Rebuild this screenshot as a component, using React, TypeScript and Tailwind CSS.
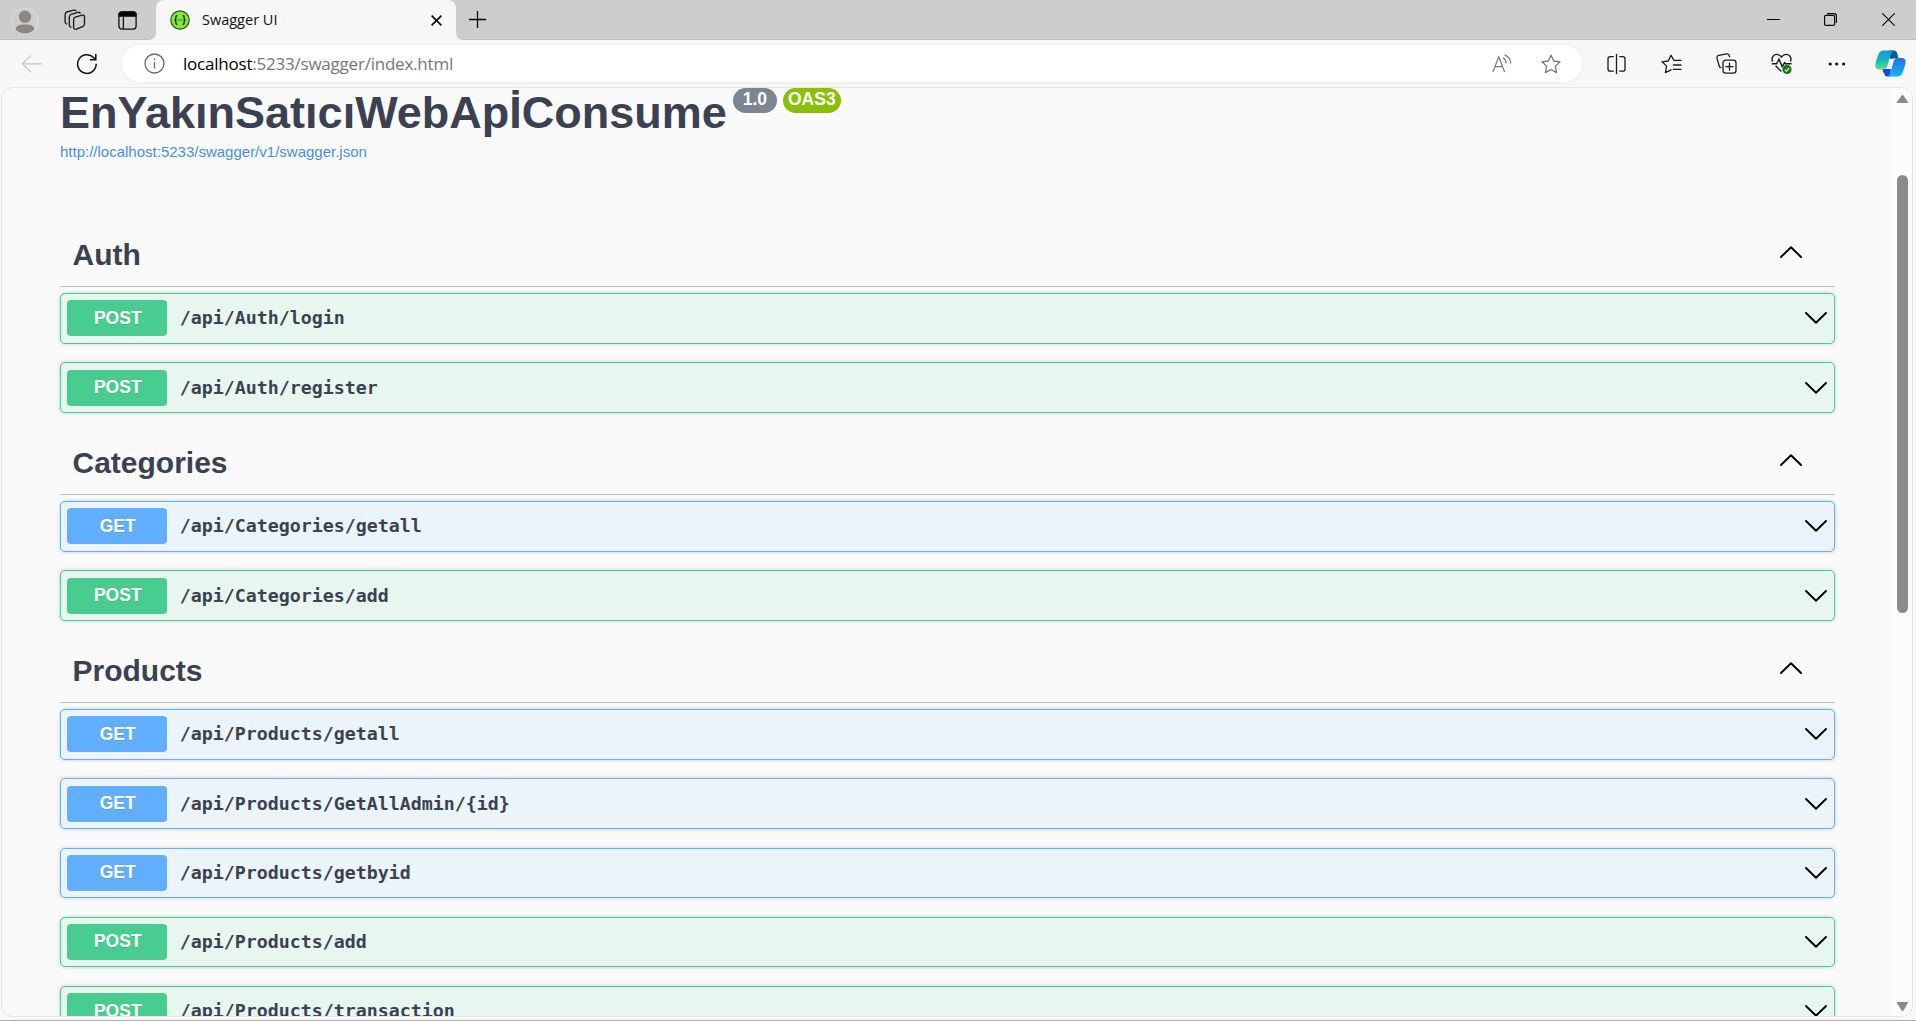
import React from "react";

type Method = "GET" | "POST";

const sections: { name: string; ops: [Method, string][] }[] = [
  { name: "Auth", ops: [["POST", "/api/Auth/login"], ["POST", "/api/Auth/register"]] },
  { name: "Categories", ops: [["GET", "/api/Categories/getall"], ["POST", "/api/Categories/add"]] },
  {
    name: "Products",
    ops: [
      ["GET", "/api/Products/getall"],
      ["GET", "/api/Products/GetAllAdmin/{id}"],
      ["GET", "/api/Products/getbyid"],
      ["POST", "/api/Products/add"],
      ["POST", "/api/Products/transaction"],
    ],
  },
];

function Chevron({ up = false }: { up?: boolean }) {
  return (
    <svg width="22" height="12" viewBox="0 0 22 12" fill="none" stroke="#000" strokeWidth="1.9" strokeLinecap="round" strokeLinejoin="round">
      <path d={up ? "M1 11 L11 1.2 L21 11" : "M1 1 L11 10.8 L21 1"} />
    </svg>
  );
}

function Operation({ method, path }: { method: Method; path: string }) {
  const post = method === "POST";
  return (
    <div
      className={
        "mb-[18.75px] flex h-[50.5px] shrink-0 items-center rounded-[5px] border pr-[7.5px] pl-[6.25px] shadow-[0_0_4px_rgba(0,0,0,0.19)] " +
        (post ? "border-[#49cc90] bg-[#e7f6ef]" : "border-[#61affe] bg-[#ebf3fb]")
      }
    >
      <span
        className={
          "flex h-9 w-[100px] shrink-0 items-center justify-center rounded-[4px] pl-px text-[17.5px] leading-none font-bold text-white [text-shadow:0_1px_0_rgba(0,0,0,0.1)] " +
          (post ? "bg-[#49cc90]" : "bg-[#61affe]")
        }
      >
        {method}
      </span>
      <span className="ml-[12.5px] flex-1 font-['DejaVu_Sans_Mono',monospace] text-[18.27px] leading-6 font-bold text-[#3b4151]">{path}</span>
      <Chevron />
    </div>
  );
}

function Section({ name, ops }: { name: string; ops: [Method, string][] }) {
  return (
    <section className="shrink-0">
      <div className="mb-[6.25px] flex h-[63.15px] items-center justify-between border-b border-[rgba(59,65,81,0.3)] pr-[33.5px] pl-[12.5px]">
        <h2 className="text-[30px] leading-9 font-bold text-[#3b4151]">{name}</h2>
        <div className="pb-[5px]">
          <Chevron up />
        </div>
      </div>
      {ops.map(([m, p]) => (
        <Operation key={p} method={m} path={p} />
      ))}
    </section>
  );
}

function TitleBar() {
  return (
    <div className="flex h-10 shrink-0 border-b border-[#bfbfbf] bg-[#cdcdcd]">
      <div className="flex w-[156px] items-center">
        <svg className="mt-0.5 ml-[11px]" width="28" height="28" viewBox="0 0 28 28">
          <circle cx="14" cy="14" r="13.2" fill="#d0cecb" stroke="#dedcd9" />
          <circle cx="14" cy="9.8" r="6.2" fill="#8b8783" />
          <path d="M4.6 22.4 C5 18.6 8 17.4 14 17.4 S23 18.6 23.4 22.4 A13 13 0 0 1 4.6 22.4Z" fill="#8b8783" />
        </svg>
        <svg className="ml-[25px]" width="22" height="22" viewBox="0 0 22 22" fill="none" stroke="#1b1b1b" strokeWidth="1.35" strokeLinejoin="round" strokeLinecap="round">
          <path d="M11.2 8.2 L18.3 6.2 Q20.4 5.8 20.5 7.8 V15 Q20.4 17 18.6 17.6 L12.4 20.2 Q9.9 20.8 9.6 18.4 V10.6 Q9.7 8.6 11.2 8.2Z" />
          <path d="M6.9 18.2 Q5.4 17.8 5.3 16 V8 Q5.4 6 7 5.4 L14 3.3 Q15.6 3 16.2 4.2" />
          <path d="M2.6 15 Q1.2 14.4 1.1 13 V5.6 Q1.2 3.6 2.8 3 L9.6 1.2 Q11.2 .8 12 1.8" />
        </svg>
        <svg className="mt-px ml-8" width="19" height="19" viewBox="0 0 19 19" fill="none" stroke="#111" strokeWidth="1.3">
          <rect x=".9" y=".9" width="17.2" height="17.2" rx="3" />
          <path d="M1 5.2 V3.6 Q1 1 3.6 1 H15.4 Q18 1 18 3.6 V5.2Z" fill="#000" />
          <path d="M5.4 5 V18" />
        </svg>
      </div>
      <div className="relative flex h-10 w-[300px] items-center rounded-t-[8px] bg-[#f7f7f7] pl-[14px]">
        <svg className="absolute bottom-0 -left-2" width="8" height="8" viewBox="0 0 8 8">
          <path d="M8 0 V8 H0 Q8 8 8 0Z" fill="#f7f7f7" />
        </svg>
        <svg className="absolute -right-2 bottom-0" width="8" height="8" viewBox="0 0 8 8">
          <path d="M0 0 V8 H8 Q0 8 0 0Z" fill="#f7f7f7" />
        </svg>
        <svg width="20" height="20" viewBox="0 0 20 20">
          <circle cx="10" cy="10" r="9.2" fill="#85ea2d" stroke="#2c5a4b" strokeWidth="1.3" />
          <path d="M7.4 5.6 Q5.8 5.6 5.8 7.2 V8.6 Q5.8 10 4.4 10 Q5.8 10 5.8 11.4 V12.8 Q5.8 14.4 7.4 14.4 M12.6 5.6 Q14.2 5.6 14.2 7.2 V8.6 Q14.2 10 15.6 10 Q14.2 10 14.2 11.4 V12.8 Q14.2 14.4 12.6 14.4" fill="none" stroke="#173647" strokeWidth="1.5" />
          <path d="M7.3 10h1.2M9.4 10h1.2M11.5 10h1.2" stroke="#173647" strokeWidth="1.2" />
        </svg>
        <span className="ml-3 font-['Open_Sans',sans-serif] text-[14.5px] text-[#111]">Swagger UI</span>
        <svg className="mt-px mr-[14px] ml-auto" width="11" height="11" viewBox="0 0 11 11" stroke="#000" strokeWidth="1.5">
          <path d="M.6 .6 L10.4 10.4 M10.4 .6 L.6 10.4" />
        </svg>
      </div>
      <svg className="mt-[11px] ml-[13px]" width="17" height="17" viewBox="0 0 17 17" stroke="#000" strokeWidth="1.3">
        <path d="M0 8.5H17 M8.5 0V17" />
      </svg>
      <div className="ml-auto flex h-[39px] items-center pr-[21px]">
        <svg width="13" height="13" viewBox="0 0 13 13" stroke="#000">
          <path d="M0 6.5H13" />
        </svg>
        <svg className="ml-11" width="13" height="13" viewBox="0 0 13 13" fill="none" stroke="#000" strokeWidth="1.1">
          <rect x=".6" y="2.4" width="10" height="10" rx="1.4" />
          <path d="M3 .6 H10.2 Q12.4 .6 12.4 2.8 V10" />
        </svg>
        <svg className="ml-[45px]" width="13" height="13" viewBox="0 0 13 13" stroke="#000" strokeWidth="1.1">
          <path d="M.2 .2 L12.8 12.8 M12.8 .2 L.2 12.8" />
        </svg>
      </div>
    </div>
  );
}

const STAR = "M10 1.2 L12.7 7 L19 7.8 L14.4 12.1 L15.6 18.6 L10 15.5 L4.4 18.6 L5.6 12.1 L1 7.8 L7.3 7Z";

function Toolbar() {
  return (
    <div className="flex h-[47px] shrink-0 items-center bg-[#f7f7f7]">
      <svg className="ml-[21px]" width="22" height="20" viewBox="0 0 22 20" fill="none" stroke="#c8c8c8" strokeWidth="1.3">
        <path d="M21 9.8H1.2 M10 1.4 L1.4 9.8 L10 18.2" />
      </svg>
      <svg className="ml-[33px]" width="22" height="22" viewBox="0 0 22 22" fill="none" stroke="#111" strokeWidth="1.5">
        <path d="M20.2 10.8 A9.3 9.3 0 1 1 17.6 4.6 L19.6 6.6 M19.8 1 V6.8 H13.9" />
      </svg>
      <div className="ml-[24px] flex h-[37px] w-[1460px] items-center rounded-full bg-white pl-[22px] shadow-[0_0_4px_rgba(0,0,0,0.06)]">
        <svg width="21" height="21" viewBox="0 0 21 21" fill="none" stroke="#6b6b6b" strokeWidth="1.3">
          <circle cx="10.5" cy="10.5" r="9.5" />
          <path d="M10.5 9 V15.5 M10.5 5.5 V7.2" />
        </svg>
        <span className="ml-[18px] font-['Open_Sans',sans-serif] text-[17px] tracking-[-0.22px] text-[#767676]">
          <span className="text-black">localhost</span>:5233/swagger/index.html
        </span>
        <svg className="ml-auto" width="20" height="19" viewBox="0 0 20 19" fill="none" stroke="#767676" strokeWidth="1.2">
          <path d="M.8 18 L6.8 2.8 L12.6 18 M3 12.6 H10.6 M11 3.8 Q14 5.4 14.2 9.4 M12.4 .8 Q18.4 3.4 18.8 9.4" />
        </svg>
        <svg className="mr-[21px] ml-[29px]" width="20" height="20" viewBox="0 0 20 20" fill="none" stroke="#767676" strokeWidth="1.3" strokeLinejoin="round">
          <path d={STAR} />
        </svg>
      </div>
      <svg className="ml-[25px]" width="19" height="20" viewBox="0 0 19 20" fill="none" stroke="#1b1b1b" strokeWidth="1.3">
        <path d="M6.8 2.6 H3.2 Q1 2.6 1 4.8 V15 Q1 17.2 3.2 17.2 H6.8 M12.2 2.6 H15.8 Q18 2.6 18 4.8 V15 Q18 17.2 15.8 17.2 H12.2 M9.5 0 V20" />
      </svg>
      <svg className="ml-[35px]" width="21" height="20" viewBox="0 0 21 20" fill="none" stroke="#1b1b1b" strokeWidth="1.3" strokeLinejoin="round" strokeLinecap="round">
        <path d="M20 6.4 H13 L10 1.2 L7.3 7 L1 7.8 L5.6 12.1 L4.4 18.6 L10 15.8 M12.4 11 H20 M12.4 15.4 H20" />
      </svg>
      <svg className="ml-[34px]" width="21" height="21" viewBox="0 0 21 21" fill="none" stroke="#1b1b1b" strokeWidth="1.3" strokeLinecap="round">
        <rect x="7" y="7.2" width="13" height="13" rx="2.6" />
        <path d="M13.5 10.2V17.2 M10 13.7H17 M4.8 14.6 Q3.6 14.4 3.2 13 L1 5.2 Q.6 3 2.6 2.4 L10.6 .8 Q12.6 .6 13.2 2.4 L13.6 3.8" />
      </svg>
      <svg className="ml-[34px]" width="22" height="22" viewBox="0 0 22 22" fill="none" stroke="#1b1b1b" strokeWidth="1.4">
        <path d="M1.6 8.6 C-.4 4 3.6 .6 7 1.6 Q9 2 10.5 4 Q12 2 14 1.6 C17.4 .6 21.4 4 19.4 8.6 M.8 10.8 H5.6 L8 6.2 L11.2 13.6 L13.6 9.6 L14.4 10.8 H20.6 M4.6 12.8 L10.4 18.4" />
        <circle cx="16" cy="16.4" r="4.6" fill="#107c10" stroke="none" />
        <path d="M13.8 16.6 L15.4 18.2 L18.2 15" stroke="#fff" strokeWidth="1.2" />
      </svg>
      <svg className="ml-[35px]" width="18" height="4" viewBox="0 0 18 4" fill="#111">
        <circle cx="2.2" cy="2" r="1.6" />
        <circle cx="8.7" cy="2" r="1.6" />
        <circle cx="15.6" cy="2" r="1.6" />
      </svg>
      <svg className="ml-[29px]" width="31" height="27" viewBox="0 0 31 27">
        <defs>
          <linearGradient id="cpTeal" x1="0" y1="0" x2="0" y2="1">
            <stop offset="0" stopColor="#1397d6" />
            <stop offset=".5" stopColor="#18b4c0" />
            <stop offset="1" stopColor="#5de08a" />
          </linearGradient>
          <linearGradient id="cpBlue" x1="0" y1="0" x2="0" y2="1">
            <stop offset="0" stopColor="#2b6fd8" />
            <stop offset="1" stopColor="#12b6fb" />
          </linearGradient>
        </defs>
        <path d="M14 .5 H19 Q21.6 .8 22.4 4 L23.4 8 L15 9Z" fill="#0b5c90" />
        <path d="M7 19 H16 L15 26.5 H12.4 Q9.8 26.2 9 23.4Z" fill="#1a47d8" />
        <path d="M8.5 .5 H19 Q16.6 1.4 15.6 5 L12.4 16 Q11.4 19.4 8.4 19.4 H4 Q0 19.2 .4 14.6 Q.8 11 3.4 4.6 Q5 .6 8.5 .5Z" fill="url(#cpTeal)" />
        <path d="M22.6 26.5 H12 Q14.6 25.6 15.6 22 L18.6 11.4 Q19.6 8 22.6 8 H27 Q31 8.2 30.6 12.6 Q30.2 16 27.6 22.4 Q26 26.4 22.6 26.5Z" fill="url(#cpBlue)" />
      </svg>
    </div>
  );
}

function Scrollbar() {
  return (
    <div className="flex w-[19px] shrink-0 flex-col items-center bg-[#fcfcfc] pt-[7px] pb-[5px]">
      <svg width="11" height="8" viewBox="0 0 11 8" fill="#8b8b8b">
        <path d="M5.5 0 Q6.2 0 6.8 1 L11 7 V8 H0 V7 L4.2 1 Q4.8 0 5.5 0Z" />
      </svg>
      <div className="mt-[72px] h-[438px] w-[11px] rounded-full bg-[#8b8b8b]" />
      <svg className="mt-auto" width="11" height="9" viewBox="0 0 11 9" fill="#8b8b8b">
        <path d="M5.5 9 Q4.8 9 4.2 8 L0 1 V0 H11 V1 L6.8 8 Q6.2 9 5.5 9Z" />
      </svg>
    </div>
  );
}

export default function App() {
  return (
    <div className="flex h-[1021px] w-[1916px] flex-col overflow-hidden border-b border-[#b0b0b0] bg-[#f7f7f7] font-['Liberation_Sans',Arial,sans-serif]">
      <TitleBar />
      <Toolbar />
      <div className="ml-px flex h-[930px] w-[1912px] shrink-0 overflow-hidden rounded-[12px] border border-[#e4e4e4] bg-[#fafafa]">
        <main className="flex min-w-0 flex-1 flex-col overflow-hidden pr-[58px] pl-[58px]">
          <div className="flex h-[55px] shrink-0 items-start">
            <h1 className="text-[45px] leading-[50px] font-bold whitespace-nowrap text-[#3b4151]">EnYakınSatıcıWebApİConsume</h1>
            <span className="ml-[6px] flex h-[25px] w-11 items-center justify-center rounded-full bg-[#7d8492] pb-px text-[17.5px] leading-none font-bold text-white">1.0</span>
            <span className="ml-[6px] flex h-[25px] w-[58px] items-center justify-center rounded-full bg-[#89bf04] pb-px text-[17.5px] leading-none font-bold text-white">OAS3</span>
          </div>
          <a className="mb-[62.85px] block h-[18px] shrink-0 text-[15px] leading-[18px] text-[#4990e2]">http://localhost:5233/swagger/v1/swagger.json</a>
          {sections.map((s) => (
            <Section key={s.name} {...s} />
          ))}
        </main>
        <Scrollbar />
      </div>
    </div>
  );
}
